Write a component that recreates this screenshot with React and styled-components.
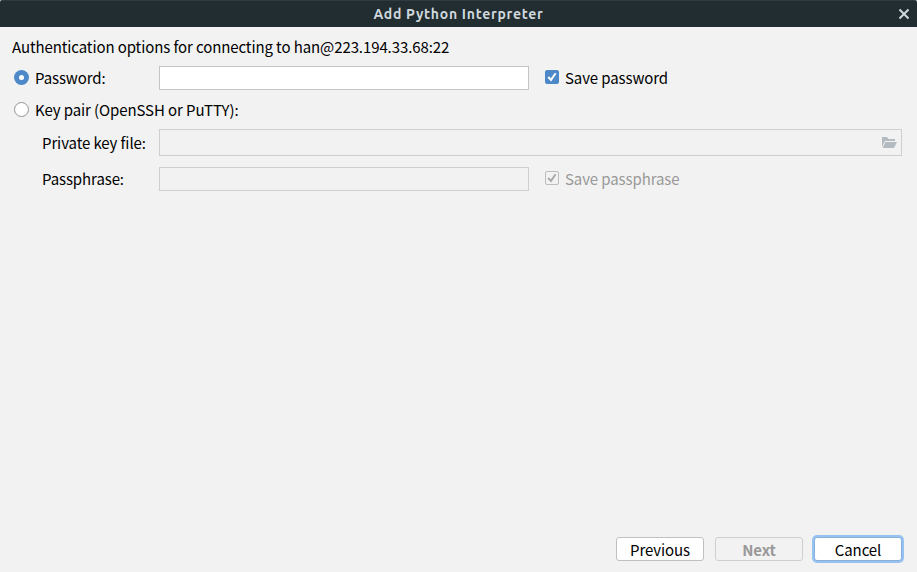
import React from "react";
import styled, { createGlobalStyle } from "styled-components";

const GlobalStyle = createGlobalStyle`
  * { box-sizing: border-box; }
  body { margin: 0; background: #f2f2f2; overflow: hidden; }
`;

const Dialog = styled.div`
  width: 917px;
  height: 572px;
  display: flex;
  flex-direction: column;
  background: #f2f2f2;
  color: #000;
  font: 15px/24px "Noto Sans CJK KR", "Noto Sans CJK SC", sans-serif;
  letter-spacing: -0.1px;
  white-space: nowrap;
`;

const TitleBar = styled.header`
  display: grid;
  grid-template-columns: 27px 1fr 27px;
  align-items: center;
  height: 27px;
  background: #222d32;
  border-top: 1px solid #2f3b40;
  border-radius: 2px 2px 0 0;
`;

const Title = styled.h1`
  margin: 0;
  color: #cfd8dc;
  font: bold 14px/26px Ubuntu, "Noto Sans", sans-serif;
  letter-spacing: 0.72px;
  text-align: center;
`;

const CloseButton = styled.button`
  display: flex;
  align-items: center;
  justify-content: center;
  height: 26px;
  padding: 0;
  border: 0;
  background: none;
`;

const Form = styled.main`
  flex: 1;
  padding: 8px 15px 0 12px;
`;

const Heading = styled.p`
  margin: 0;
  height: 31px;
`;

const Row = styled.div`
  display: grid;
  grid-template-columns: 147px ${(p) => (p.$wide ? "1fr" : "370px 1fr")};
  height: ${(p) => p.$height}px;
  margin-bottom: ${(p) => p.$gap || 0}px;
`;

const Label = styled.label`
  padding-left: ${(p) => (p.$indent ? 30 : 0)}px;
  padding-top: ${(p) => p.$drop || 0}px;
`;

const Choice = styled.label`
  display: flex;
  gap: 6px;
  padding-left: ${(p) => (p.$check ? 16 : 2)}px;
  color: ${(p) => (p.$disabled ? "#999" : "#000")};

  svg { flex: none; margin-top: 4px; }
`;

const Field = styled.div`
  display: flex;
  align-items: center;
  justify-content: flex-end;
  padding-right: 4px;
  border: 1px solid ${(p) => (p.$disabled ? "#cfcfcf" : "#c4c4c4")};
  background: ${(p) => (p.$disabled ? "#f2f2f2" : "#fff")};
`;

const Footer = styled.footer`
  display: flex;
  justify-content: flex-end;
  gap: 11px;
  padding: 0 15px 11px 0;
`;

const Button = styled.button`
  width: 88px;
  height: 24px;
  padding: 1px 0 0;
  border: 1px solid ${(p) => (p.$focused ? "#87afda" : p.disabled ? "#cfcfcf" : "#c0c0c0")};
  border-radius: 3px;
  background: ${(p) => (p.disabled ? "#f2f2f2" : "#fff")};
  box-shadow: ${(p) => (p.$focused ? "0 0 0 2px #97c3f3" : "none")};
  color: ${(p) => (p.disabled ? "#999" : "#000")};
  font: inherit;
  font-weight: ${(p) => (p.$primary ? 700 : 400)};
  letter-spacing: inherit;
  line-height: 22px;
`;

function Radio({ checked }) {
  return (
    <svg width="15" height="15" viewBox="0 0 15 15">
      {checked ? (
        <>
          <circle cx="7.5" cy="7.5" r="7.5" fill="#4d89c9" />
          <circle cx="7.5" cy="7.5" r="2.5" fill="#fff" />
        </>
      ) : (
        <circle cx="7.5" cy="7.5" r="7" fill="#fff" stroke="#929292" />
      )}
    </svg>
  );
}

function Check({ disabled }) {
  return (
    <svg width="14" height="14" viewBox="0 0 14 14">
      <rect x=".5" y=".5" width="13" height="13" rx="1.5"
        fill={disabled ? "#f2f2f2" : "#4d89c9"} stroke={disabled ? "#bdbdbd" : "#4d89c9"} />
      <path d="M3.2 7 6 9.9 10.6 3.2" fill="none" stroke={disabled ? "#ababab" : "#fff"} strokeWidth="2" />
    </svg>
  );
}

function Folder() {
  return (
    <svg width="15" height="11" viewBox="0 0 15 11">
      <path d="M0 0h5l1.5 2H13v2H3L0 10z" fill="#b4bbc0" />
      <path d="M3.5 5H15l-3 6H.5z" fill="#b4bbc0" />
    </svg>
  );
}

export default function App() {
  return (
    <>
      <GlobalStyle />
      <Dialog>
        <TitleBar>
          <span />
          <Title>Add Python Interpreter</Title>
          <CloseButton aria-label="Close">
            <svg width="12" height="12" viewBox="0 0 12 12">
              <path d="m1.5 1.5 9 9m0-9-9 9" stroke="#cfd8dc" strokeWidth="2" />
            </svg>
          </CloseButton>
        </TitleBar>
        <Form>
          <Heading>Authentication options for connecting to han@223.194.33.68:22</Heading>
          <Row $height={24} $gap={8}>
            <Choice><Radio checked />Password:</Choice>
            <Field />
            <Choice $check><Check />Save password</Choice>
          </Row>
          <Row $height={24} $gap={7}>
            <Choice><Radio />Key pair (OpenSSH or PuTTY):</Choice>
          </Row>
          <Row $height={27} $gap={11} $wide>
            <Label $indent $drop={2}>Private key file:</Label>
            <Field $disabled><Folder /></Field>
          </Row>
          <Row $height={24}>
            <Label $indent>Passphrase:</Label>
            <Field $disabled />
            <Choice $check $disabled><Check disabled />Save passphrase</Choice>
          </Row>
        </Form>
        <Footer>
          <Button>Previous</Button>
          <Button disabled $primary>Next</Button>
          <Button $focused>Cancel</Button>
        </Footer>
      </Dialog>
    </>
  );
}
